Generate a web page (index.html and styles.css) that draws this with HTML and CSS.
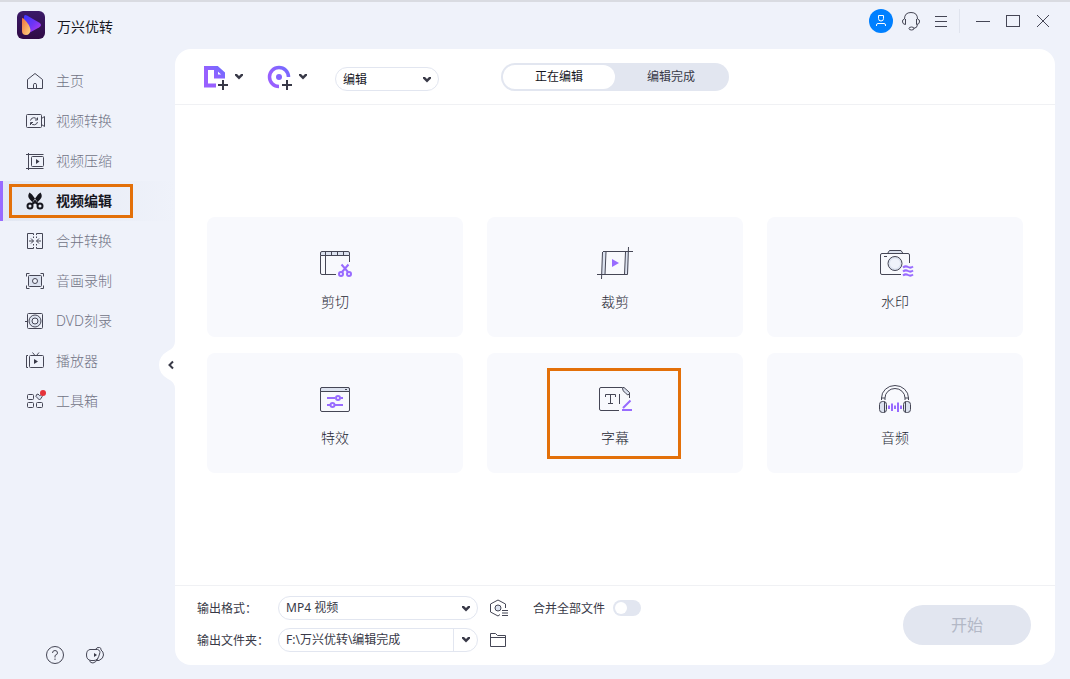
FILE: index.html
```html
<!DOCTYPE html>
<html lang="zh-CN">
<head>
<meta charset="utf-8">
<title>万兴优转</title>
<link rel="stylesheet" href="styles.css">
</head>
<body>
<div class="app">
  <aside class="sidebar">
    <div class="brand">
      <svg class="logo" viewBox="0 0 28 28" aria-hidden="true">
        <defs>
          <linearGradient id="lg-bg" x1="0" y1="0" x2="0" y2="1"><stop offset="0" stop-color="#3b1a68"/><stop offset="1" stop-color="#300b45"/></linearGradient>
          <linearGradient id="lg-play" x1="0" y1="0" x2="1" y2="1"><stop offset="0" stop-color="#3d35ff"/><stop offset=".5" stop-color="#6d35f5"/><stop offset="1" stop-color="#c13af0"/></linearGradient>
          <linearGradient id="lg-drop" x1="0" y1="0" x2="1" y2="1"><stop offset="0" stop-color="#f0703f"/><stop offset="1" stop-color="#ffd680"/></linearGradient>
        </defs>
        <rect width="28" height="28" rx="6" fill="url(#lg-bg)"/>
        <path d="M7 6Q7 3 10 4.500L22 11.500Q26 14 22 16.500L12 22Q7 23 7 19Z" fill="url(#lg-play)"/>
        <path d="M5 8Q5 6 7 8Q13 14 13.500 19Q13 24 9 24Q5 24 5 20Z" fill="url(#lg-drop)"/>
      </svg>
      <span class="brand-name">万兴优转</span>
    </div>
    <nav class="nav">
      <a class="nav-item" href="#"><svg class="ico" viewBox="0 0 20 20"><path d="M2.500 17.500V8.500L10 2.500L17.500 8.500V17.500ZM8.500 17.500V13.500Q8.500 12.500 10 12.500T11.500 13.500V17.500"/></svg>主页</a>
      <a class="nav-item" href="#"><svg class="ico" viewBox="0 0 20 20"><rect x="1.500" y="3.500" width="15" height="13" rx="1"/><path d="M16.500 7.500L19.500 5.500V15.500L16.500 13.500M5.500 9.500A3.500 3.500 0 0 1 12 8.500M12.500 6.500V9H10M12.500 11A3.500 3.500 0 0 1 6 12M5.500 14V11.500H8"/></svg>视频转换</a>
      <a class="nav-item" href="#"><svg class="ico" viewBox="0 0 20 20"><rect x="6.500" y="5.500" width="12" height="10" rx="1"/><path d="M1 3.500H18.500M1 17.500H18.500M3.500 2V19"/><path class="ink" d="M11 8L14.500 10.500L11 13Z"/></svg>视频压缩</a>
      <a class="nav-item active" href="#" aria-current="page"><svg class="ico" viewBox="0 0 20 20"><path class="ink" d="M4.500 1.500Q2 5 4.500 8L9 13L12.500 11L7 3.500ZM15.500 1.500Q18 5 15.500 8L11 13L7.500 11L13 3.500Z"/><circle class="bold" cx="5" cy="15" r="2.500"/><circle class="bold" cx="15" cy="15" r="2.500"/><path class="bold" d="M7 13.500L10 10L13 13.500"/></svg>视频编辑<span class="marker nav-marker"></span></a>
      <a class="nav-item" href="#"><svg class="ico" viewBox="0 0 20 20"><path d="M8.500 4V2.500H2.500V17.500H8.500V16M11.500 4V2.500H17.500V17.500H11.500V16M8.500 5.500V7M11.500 5.500V7M8.500 13V14.500M11.500 13V14.500M4 10H8.500M6 7.500L8.500 10L6 12.500M16 10H11.500M14 7.500L11.500 10L14 12.500"/></svg>合并转换</a>
      <a class="nav-item" href="#"><svg class="ico" viewBox="0 0 20 20"><path d="M1.500 5.500V2.500H4.500M15.500 2.500H18.500V5.500M1.500 14.500V17.500H4.500M15.500 17.500H18.500V14.500"/><rect class="tint" x="3.500" y="4.500" width="13" height="11" rx="1"/><circle class="clear" cx="10" cy="10" r="2.500"/></svg>音画录制</a>
      <a class="nav-item" href="#"><svg class="ico" viewBox="0 0 20 20"><rect x="2.500" y="2.500" width="15" height="15" rx="1"/><circle class="tint" cx="10" cy="10" r="6"/><circle class="clear" cx="10" cy="10" r="3"/><path d="M0 10.500H3"/></svg>DVD刻录</a>
      <a class="nav-item" href="#"><svg class="ico" viewBox="0 0 20 20"><rect x="4.500" y="4.500" width="14" height="12" rx="1"/><path d="M3 4.500H1.500V16.500H3M7.500 1.500L10 4.500M14 1.500L11.500 4.500"/><path class="ink" d="M9 8L13 10.500L9 13Z"/></svg>播放器</a>
      <a class="nav-item" href="#"><svg class="ico" viewBox="0 0 20 20"><rect x="2.500" y="3.500" width="6" height="5" rx="1"/><rect x="2.500" y="11.500" width="6" height="5" rx="1"/><rect x="11.500" y="11.500" width="6" height="5" rx="1"/><path class="tint" d="M14.500 9L11 5.500Q11 3 13 3L14.500 4.500L17 3.500Q18.500 5 14.500 9Z"/><circle class="dot" cx="18" cy="2" r="3"/></svg>工具箱</a>
    </nav>
    <div class="side-tools">
      <button class="bare" type="button" aria-label="帮助"><svg class="ico" viewBox="0 0 20 20"><circle cx="10" cy="10" r="8.500"/><path d="M7.500 8Q7.500 5.500 10 5.500T12.500 8Q12.500 9.500 10 10.500V12.500M10 13.500V15"/></svg></button>
      <button class="bare" type="button" aria-label="教程"><svg class="ico" viewBox="0 0 20 20"><path d="M5 4.500H12.500Q16 5.500 14.500 9Q13 15.500 9 15.500H6Q1.500 15 1.500 10T5 4.500ZM10.500 4.500Q11.500 2 14.500 2.500Q16.500 3 16 5Q18.500 6.500 18.500 10T14 15.500H11.500M4.500 15.500Q5 18 8 18Q11 17.500 13 13.500"/><path class="ink" d="M9 8L12 10L9 12Z"/></svg></button>
    </div>
    <button class="collapse" type="button" aria-label="收起侧栏"><svg viewBox="0 0 16 48"><path d="M16 0Q16 7 9 10Q0 15 0 24T9 38Q16 41 16 48Z" fill="#fff"/><path d="M14 20.500L10.500 24L14 27.500" fill="none" stroke="#383947" stroke-width="2"/></svg></button>
  </aside>

  <div class="main">
    <header class="titlebar">
      <button class="win" type="button" aria-label="账户"><svg class="ico avatar" viewBox="0 0 24 24"><circle cx="12" cy="12" r="12"/><path d="M9.500 6.500H14.500V9.500Q14.500 12 12 12T9.500 9.500ZM7.500 17V16Q7.500 14.500 9 14.500H15Q16.500 14.500 16.500 16V17"/></svg></button>
      <button class="win" type="button" aria-label="客服"><svg class="ico" viewBox="0 0 20 20"><path d="M3.500 8Q3.500 1.500 10 1.500T16.500 8M3.500 8Q1 8.500 1.500 11T4.500 13.500V8M16.500 8Q19 8.500 18.500 11T15.500 13.500V8M16.500 13.500Q16.500 17 12.500 17.500"/><ellipse cx="10.500" cy="17.500" rx="2.500" ry="1.500"/></svg></button>
      <button class="win" type="button" aria-label="菜单"><svg class="ico" viewBox="0 0 20 20"><path d="M4 5.500H16M4 10.500H16M4 15.500H16"/></svg></button>
      <span class="divider"></span>
      <button class="win" type="button" aria-label="最小化"><svg class="ico" viewBox="0 0 20 20"><path d="M3 10.500H17"/></svg></button>
      <button class="win" type="button" aria-label="最大化"><svg class="ico" viewBox="0 0 20 20"><rect x="3.500" y="4.500" width="13" height="11"/></svg></button>
      <button class="win" type="button" aria-label="关闭"><svg class="ico" viewBox="0 0 20 20"><path d="M4 4L16 16M16 4L4 16"/></svg></button>
    </header>

    <main class="panel">
      <div class="toolbar">
        <div class="tools">
          <button class="bare add" type="button" aria-label="添加文件">
            <svg class="add-ico" viewBox="0 0 28 27"><defs><linearGradient id="pg" x1="0" y1="1" x2="1" y2="0"><stop offset=".4" stop-color="#9860ff"/><stop offset="1" stop-color="#716bff"/></linearGradient></defs><path d="M14 22.500H4V5H15L21 10.500V13.500H14V5" fill="none" stroke="url(#pg)" stroke-width="4"/><path d="M15 16H26V27H15Z" fill="#fff"/><path d="M16 22H26M21 17V27" stroke="#383947" stroke-width="2"/></svg>
            <svg class="caret" viewBox="0 0 8 6"><path d="M0 0H2L4 2L6 0H8V1.500L4 5.500L0 1.500Z"/></svg>
          </button>
          <button class="bare add" type="button" aria-label="添加光盘">
            <svg class="add-ico" viewBox="0 0 28 27"><path d="M13 23.500A9.500 9.500 0 1 1 22.500 14" fill="none" stroke="url(#pg)" stroke-width="3.500"/><circle cx="13" cy="14" r="3" fill="#8565ff"/><path d="M16 22H26M21 17V27" stroke="#383947" stroke-width="2"/></svg>
            <svg class="caret" viewBox="0 0 8 6"><path d="M0 0H2L4 2L6 0H8V1.500L4 5.500L0 1.500Z"/></svg>
          </button>
          <div class="picker mode"><select aria-label="模式"><option>编辑</option></select><svg class="caret" viewBox="0 0 8 6"><path d="M0 0H2L4 2L6 0H8V1.500L4 5.500L0 1.500Z"/></svg></div>
        </div>
        <div class="segmented">
          <button class="segment selected" type="button">正在编辑</button>
          <button class="segment" type="button">编辑完成</button>
        </div>
      </div>

      <section class="cards">
        <button class="card" type="button">
          <svg class="art" viewBox="0 0 36 36"><path class="tint" d="M3.500 10.500V8Q3.500 6.500 5 6.500H31Q32.500 6.500 32.500 8V10.500Z"/><path d="M3.500 10.500V28Q3.500 29.500 5 29.500H19M32.500 10.500V17M8.500 7V29.500M14.500 7V10M20.500 7V10M26.500 7V10"/><g class="violet"><circle cx="24" cy="29" r="2"/><circle cx="32" cy="29" r="2"/><path d="M24.500 19.500L31 27M31.500 19.500L25 27"/></g></svg>
          <span>剪切</span>
        </button>
        <button class="card" type="button">
          <svg class="art" viewBox="0 0 36 36"><path class="tint" stroke="none" d="M5.500 6.500H9L8 29.500H4.500ZM28.500 6.500H32L31 29.500H27.500Z"/><path d="M6 6.500H36M0 29.500H30.500M5.500 7L4.500 34M9 7L8 29.500M31.500 2L30.500 29.500M28.500 7L27.500 29.500"/><path class="play" d="M15 14L22 18L15 22Z"/></svg>
          <span>裁剪</span>
        </button>
        <button class="card" type="button">
          <svg class="art" viewBox="0 0 36 36"><path class="tint" d="M10.500 8.500L12.500 5.500H24L26 8.500"/><path d="M24 29.500H5Q3.500 29.500 3.500 28V10Q3.500 8.500 5 8.500H31Q32.500 8.500 32.500 10V18M7 11.500H10"/><circle class="tint" cx="18" cy="18.500" r="7"/><circle cx="18" cy="18.500" r="5" fill="#eff2fa" stroke="none"/><path class="violet" d="M26 22.500Q28.500 20.500 31 22T36 21.500M26 26.500Q28.500 24.500 31 26T36 25.500M26 30.500Q28.500 28.500 31 30T36 29.500"/></svg>
          <span>水印</span>
        </button>
        <button class="card" type="button">
          <svg class="art" viewBox="0 0 36 36"><rect x="3.500" y="6.500" width="29" height="24" rx="1.500"/><path class="tint" d="M3.500 10.500V8Q3.500 6.500 5 6.500H31Q32.500 6.500 32.500 8V10.500Z"/><path d="M28 8.500H30"/><g class="violet"><path d="M10 17H18M23.500 17H26M10 24H13M18 24H26"/><circle cx="21" cy="17" r="2"/><circle cx="15.500" cy="24" r="2"/></g></svg>
          <span>特效</span>
        </button>
        <button class="card" type="button">
          <svg class="art" viewBox="0 0 36 36"><path d="M25 6.500H4Q2.500 6.500 2.500 8V28Q2.500 29.500 4 29.500H22M32.500 13V17M8.500 16V13.500H18.500V16M13.500 13.500V22.500M11 22.500H16M22.500 13V23"/><path class="tint" d="M25.500 6.500H27L32.500 11.500V13.500Q30 14.500 28.500 12Q25 10 25.500 6.500Z"/><path class="violet" d="M26 27L33.500 19.500M25 29H35"/></svg>
          <span>字幕</span>
          <span class="marker card-marker"></span>
        </button>
        <button class="card" type="button">
          <svg class="art" viewBox="0 0 36 36"><path d="M4.500 19V17A13.500 12.500 0 0 1 31.500 17V19M8 19V17A10 9.500 0 0 1 28 17V19"/><rect class="tint" x="2.500" y="20.500" width="7" height="11" rx="3"/><rect class="tint" x="26.500" y="20.500" width="7" height="11" rx="3"/><path d="M7.500 20.500V31.500M28.500 20.500V31.500M4.500 17H8M28 17H31.500"/><path class="violet" d="M12 24.500V28M15 22.500V30M18 24.500V28M21 21.500V31M24 24.500V28"/></svg>
          <span>音频</span>
        </button>
      </section>

      <footer class="output">
        <div class="fields">
          <label for="format">输出格式：</label>
          <div class="picker"><select id="format"><option>MP4 视频</option></select><svg class="caret" viewBox="0 0 8 6"><path d="M0 0H2L4 2L6 0H8V1.500L4 5.500L0 1.500Z"/></svg></div>
          <button class="bare" type="button" aria-label="格式设置"><svg class="ico" viewBox="0 0 20 20"><path d="M17.500 10V6L10 2L2.500 6V14L10 18L12 16.500M14 12.500H20M14 15H20M14 17.500H20"/><circle class="tint" cx="10" cy="10" r="3"/></svg></button>
          <div class="merge"><label for="merge">合并全部文件</label><input class="toggle" id="merge" type="checkbox"></div>
          <label for="folder">输出文件夹：</label>
          <div class="picker"><input class="path" id="folder" type="text" value="F:\万兴优转\编辑完成"><button class="drop" type="button" aria-label="选择路径"><svg class="caret" viewBox="0 0 8 6"><path d="M0 0H2L4 2L6 0H8V1.500L4 5.500L0 1.500Z"/></svg></button></div>
          <button class="bare" type="button" aria-label="打开文件夹"><svg class="ico" viewBox="0 0 20 20"><path d="M2.500 16.500V3.500H7.500L9.500 5.500H17.500V16.500ZM2.500 7.500H17.500"/></svg></button>
        </div>
        <button class="start" type="button" disabled>开始</button>
      </footer>
    </main>
  </div>
</div>
</body>
</html>
```
FILE: styles.css
```css
* { box-sizing: border-box; }

body {
  margin: 0;
  background: #eff2fa;
  color: #383947;
  font: 12px/20px "Noto Sans", "Noto Sans CJK SC", sans-serif;
}

button, input, select {
  font: inherit;
  color: inherit;
  margin: 0;
  padding: 0;
  border: 0;
  background: none;
}

svg { display: block; flex: none; }

.app {
  display: flex;
  min-height: 100vh;
  border-top: 2px solid #d9dbe1;
}

/* Icons */
.ico, .art { fill: none; stroke: #454655; stroke-width: 1; overflow: visible; }
.ico { width: 20px; height: 20px; }
.ico .ink { fill: #383947; stroke: none; }
.ico .bold { stroke-width: 2; }
.ico .dot { fill: #e5333a; stroke: none; }
.tint { fill: #dce2ef; }
.clear { fill: #eff2fa; }
.caret { width: 8px; height: 6px; fill: #383947; }
.bare { display: flex; align-items: center; }

/* Sidebar */
.sidebar {
  position: relative;
  display: flex;
  flex-direction: column;
  flex: 0 0 175px;
}

.brand {
  display: flex;
  align-items: center;
  gap: 12px;
  padding: 9px 17px 22px;
}

.logo { width: 28px; height: 28px; }
.brand-name { padding-top: 4px; color: #16161e; font-size: 14px; }

.nav-item {
  position: relative;
  display: flex;
  align-items: center;
  gap: 11px;
  height: 40px;
  padding-left: 25px;
  color: #717285;
  font-size: 14px;
  font-weight: 300;
  text-decoration: none;
}

.nav-item.active {
  background: linear-gradient(90deg, #e3e8f3, #eff2fa);
  box-shadow: inset 3px 0 #986bff;
  color: #16161e;
  font-weight: 700;
}

.nav-item.active .ink { fill: #16161e; }
.nav-item.active .bold { stroke: #16161e; }

.marker { position: absolute; border: 3px solid #e37009; pointer-events: none; }
.nav-marker { left: 9px; top: 3px; width: 124px; height: 34px; }

.side-tools {
  display: flex;
  gap: 20px;
  margin-top: auto;
  padding: 0 45px 14px;
}

.collapse { position: absolute; right: 0; top: 339px; width: 16px; height: 48px; }

/* Window */
.main {
  display: flex;
  flex: 1;
  flex-direction: column;
  min-width: 0;
}

.titlebar {
  display: flex;
  justify-content: flex-end;
  padding: 4px 12px 13px;
}

.win {
  display: flex;
  align-items: center;
  justify-content: center;
  width: 30px;
  height: 30px;
}

.avatar { width: 24px; height: 24px; stroke: #fff; }
.avatar circle { fill: #0080ff; stroke: none; }
.divider { width: 1px; height: 24px; margin: 3px 8px 3px 3px; background: #e0e4ee; }

.panel {
  display: flex;
  flex: 1;
  flex-direction: column;
  margin: 0 15px 14px 0;
  border-radius: 16px;
  background: #fff;
}

.toolbar {
  display: grid;
  grid-template-columns: 1fr auto 1fr;
  align-items: center;
  height: 56px;
  padding: 0 27px;
  border-bottom: 1px solid #f0f1f4;
}

.tools {
  display: flex;
  align-items: flex-start;
  align-self: start;
  gap: 23px;
  padding-top: 14px;
}

.add { gap: 5px; }
.add-ico { width: 28px; height: 27px; }

.picker {
  position: relative;
  display: flex;
  width: 200px;
  height: 24px;
  border: 1px solid #e2e6f0;
  border-radius: 12px;
}

.picker select, .path {
  flex: 1;
  min-width: 0;
  padding: 1px 7px 0;
  appearance: none;
  outline: 0;
}

.picker select + .caret {
  position: absolute;
  right: 7px;
  top: 9px;
  pointer-events: none;
}

.mode { width: 104px; margin: 4px 0 0 5px; color: #16161e; }

.drop {
  display: flex;
  align-items: center;
  justify-content: center;
  width: 24px;
  border-left: 1px solid #e2e6f0;
}

.segmented {
  display: flex;
  padding: 2px;
  border-radius: 14px;
  background: #e2e6f0;
}

.segment {
  width: 112px;
  height: 24px;
  border-radius: 12px;
}

.selected { background: #fff; color: #16161e; }

/* Function cards */
.cards {
  display: grid;
  flex: 1;
  grid-template-columns: repeat(3, 1fr);
  align-content: center;
  gap: 16px 24px;
  padding: 0 32px;
}

.card {
  position: relative;
  display: flex;
  flex-direction: column;
  align-items: center;
  gap: 10px;
  height: 120px;
  padding-top: 28px;
  border-radius: 8px;
  background: #f8f9fd;
  color: #262733;
  font-size: 14px;
  font-weight: 300;
  line-height: 22px;
}

.art { width: 36px; height: 36px; }
.art .violet { stroke: #986bff; stroke-width: 2; }
.art .play { fill: #986bff; stroke: none; }
.card-marker { left: 60px; right: 62px; top: 15px; height: 91px; }

/* Output */
.output {
  display: flex;
  align-items: center;
  justify-content: space-between;
  height: 80px;
  padding: 0 24px 2px 22px;
  border-top: 1px solid #f0f1f4;
}

.fields {
  display: grid;
  grid-template-columns: 71px 200px 20px auto;
  align-items: center;
  gap: 8px 10px;
  margin-top: -2px;
}

.fields label { padding-top: 3px; white-space: nowrap; }
.merge { display: flex; align-items: center; gap: 8px; margin-left: 15px; }

.toggle {
  width: 28px;
  height: 16px;
  padding: 2px;
  border-radius: 8px;
  background: #e2e6f0;
  appearance: none;
}

.toggle::before {
  content: "";
  display: block;
  width: 12px;
  height: 12px;
  border-radius: 50%;
  background: #fff;
}

.start {
  width: 128px;
  height: 40px;
  border-radius: 20px;
  background: #e2e6f0;
  color: #b3b8c6;
  font-size: 16px;
}
```
